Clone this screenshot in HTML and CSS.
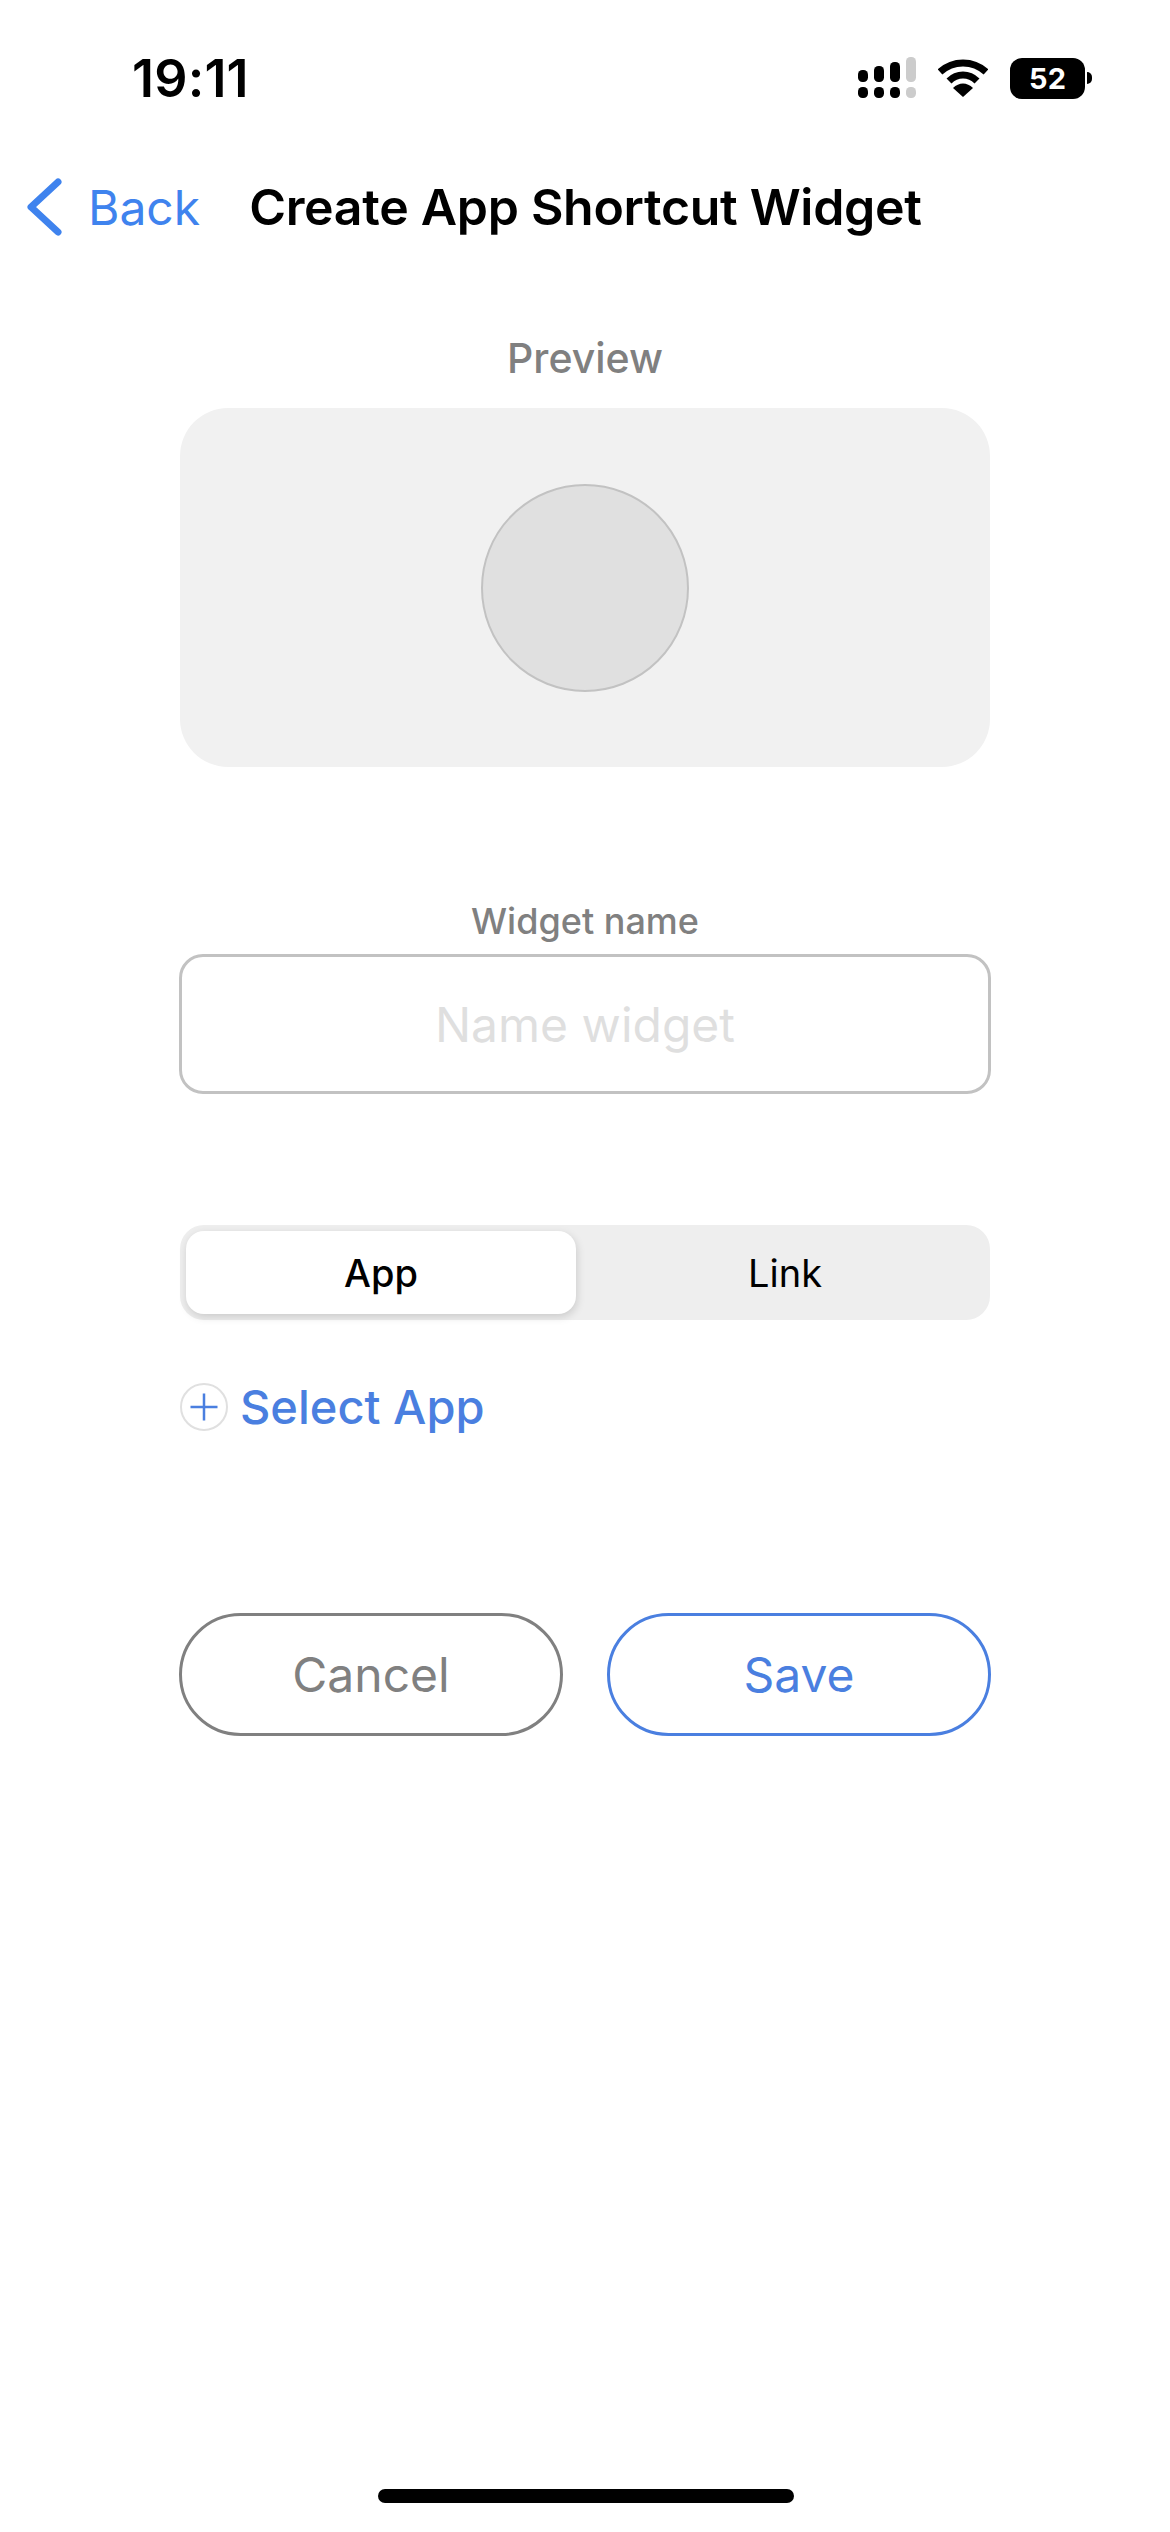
FILE: index.html

```html
<!DOCTYPE html>
<html lang="en">
<head>
  <meta name="viewport" content="width=device-width, initial-scale=1.0">
  <meta charset="UTF-8" />
  <title>Create App Shortcut Widget</title>
  <link rel="stylesheet" href="styles.css">
</head>
<body>
  <div class="status-bar">
    <span class="time">19:11</span>
    <div class="status-icons">
      <svg class="signal" width="58" height="42" viewBox="0 0 58 42">
        <rect x="0" y="13" width="10" height="12" rx="4.5" fill="#000"/>
        <rect x="16" y="9" width="10" height="16" rx="4.5" fill="#000"/>
        <rect x="32" y="5" width="10" height="20" rx="4.5" fill="#000"/>
        <rect x="48" y="0" width="10" height="25" rx="4.5" fill="#ccc"/>
        <rect x="0" y="30" width="10" height="11" rx="4.5" fill="#000"/>
        <rect x="16" y="30" width="10" height="11" rx="4.5" fill="#000"/>
        <rect x="32" y="30" width="10" height="11" rx="4.5" fill="#000"/>
        <rect x="48" y="30" width="10" height="11" rx="4.5" fill="#ccc"/>
      </svg>
      <svg class="wifi" width="50" height="38" viewBox="0 0 50 38">
        <path d="M2 13 C15 1 35 1 48 13" fill="none" stroke="#000" stroke-width="7"/>
        <path d="M11 22 C19 14 31 14 39 22" fill="none" stroke="#000" stroke-width="7"/>
        <path d="M15 29 C21 23 29 23 35 29 L25 38 Z" fill="#000"/>
      </svg>
      <div class="battery">
        <div class="battery-body">52</div>
        <div class="battery-tip"></div>
      </div>
    </div>
  </div>

  <div class="nav">
    <a class="back">
      <svg width="36" height="58" viewBox="0 0 36 58">
        <path d="M32 4 L5 29 L32 54" fill="none" stroke="#3f83ee" stroke-width="7" stroke-linecap="round" stroke-linejoin="round"/>
      </svg>
      <span>Back</span>
    </a>
    <h1>Create App Shortcut Widget</h1>
  </div>

  <div class="content">
    <p class="preview-label">Preview</p>
    <div class="preview-card">
      <div class="preview-circle"></div>
    </div>

    <label class="name-label" for="widget-name">Widget name</label>
    <input class="name-input" id="widget-name" type="text" placeholder="Name widget">

    <div class="segment">
      <div class="segment-item active">App</div>
      <div class="segment-item">Link</div>
    </div>

    <div class="select-app">
      <svg width="48" height="48" viewBox="0 0 48 48">
        <circle cx="24" cy="24" r="23" fill="none" stroke="#e0e0e0" stroke-width="2"/>
        <path d="M10.5 24 H37.5 M24 10.5 V37.5" stroke="#4a7fe0" stroke-width="2.5" fill="none"/>
      </svg>
      <span>Select App</span>
    </div>

    <div class="buttons">
      <button class="btn btn-cancel">Cancel</button>
      <button class="btn btn-save">Save</button>
    </div>
  </div>

  <div class="home-bar"></div>
</body>
</html>
```

FILE: styles.css

```css
html, body {
  margin: 0;
  padding: 0;
}
body {
  width: 1170px;
  height: 2532px;
  background: #fff;
  font-family: Inter, "Liberation Sans", sans-serif;
  color: #000;
  display: flex;
  flex-direction: column;
  overflow: hidden;
}

.status-bar {
  height: 56px;
  margin-top: 50px;
  display: flex;
  justify-content: space-between;
  align-items: center;
  padding: 0 78px 0 132px;
}
.time {
  font-size: 52px;
  font-weight: 600;
  letter-spacing: 0.2px;
}
.status-icons {
  display: flex;
  align-items: center;
  gap: 22px;
}
.battery {
  display: flex;
  align-items: center;
  gap: 2px;
}
.battery-body {
  width: 75px;
  height: 41px;
  background: #000;
  color: #fff;
  border-radius: 12px;
  font-size: 29px;
  font-weight: 700;
  line-height: 41px;
  text-align: center;
}
.battery-tip {
  width: 5px;
  height: 12px;
  background: #000;
  border-radius: 0 6px 6px 0;
}

.nav {
  margin-top: 69px;
  height: 64px;
  display: flex;
  align-items: center;
  padding-left: 26px;
}
.back {
  display: flex;
  align-items: center;
  gap: 26px;
  color: #3f83ee;
  font-size: 48px;
}
h1 {
  margin: 0 0 0 49px;
  font-size: 50px;
  font-weight: 600;
  letter-spacing: -0.3px;
  white-space: nowrap;
}

.content {
  width: 812px;
  margin: 0 auto;
  display: flex;
  flex-direction: column;
}
.preview-label {
  margin: 95px 0 0;
  height: 48px;
  line-height: 48px;
  text-align: center;
  color: #808080;
  font-size: 41px;
  font-weight: 500;
}
.preview-card {
  margin: 26px 1px 0;
  height: 359px;
  background: #f1f1f1;
  border-radius: 48px;
  display: flex;
  align-items: center;
  justify-content: center;
}
.preview-circle {
  width: 208px;
  height: 208px;
  box-sizing: border-box;
  border-radius: 50%;
  background: #e0e0e0;
  border: 2px solid #c2c2c2;
}
.name-label {
  margin-top: 134px;
  height: 40px;
  line-height: 40px;
  text-align: center;
  color: #808080;
  font-size: 36px;
  font-weight: 500;
}
.name-input {
  margin-top: 13px;
  height: 140px;
  box-sizing: border-box;
  width: 100%;
  border: 3px solid #c2c2c2;
  border-radius: 24px;
  background: #fff;
  text-align: center;
  font-family: inherit;
  font-size: 48px;
  outline: none;
}
.name-input::placeholder {
  color: #dfdfdf;
  opacity: 1;
}

.segment {
  margin: 131px 1px 0;
  height: 95px;
  box-sizing: border-box;
  padding: 6px;
  background: #eee;
  border-radius: 24px;
  display: flex;
}
.segment-item {
  flex: 1;
  display: flex;
  align-items: center;
  justify-content: center;
  font-size: 38px;
  font-weight: 400;
  padding-left: 10px;
}
.segment-item.active {
  flex: none;
  width: 390px;
  box-sizing: border-box;
  padding-left: 0;
  font-weight: 500;
  background: #fff;
  border-radius: 18px;
  box-shadow: 1px 3px 8px rgba(0,0,0,0.15);
}

.select-app {
  margin: 58px 0 0 1px;
  display: flex;
  align-items: center;
  gap: 12px;
  color: #4a7fe0;
  font-size: 47px;
  font-weight: 500;
}

.buttons {
  margin-top: 178px;
  display: flex;
  justify-content: space-between;
}
.btn {
  width: 384px;
  height: 123px;
  border-radius: 62px;
  background: #fff;
  font-family: inherit;
  font-size: 48px;
  border: 3px solid;
}
.btn-cancel {
  color: #808080;
  border-color: #808080;
}
.btn-save {
  color: #4a7fe0;
  border-color: #4a7fe0;
}

.home-bar {
  position: absolute;
  left: 378px;
  top: 2489px;
  width: 416px;
  height: 14px;
  background: #000;
  border-radius: 7px;
}
```
